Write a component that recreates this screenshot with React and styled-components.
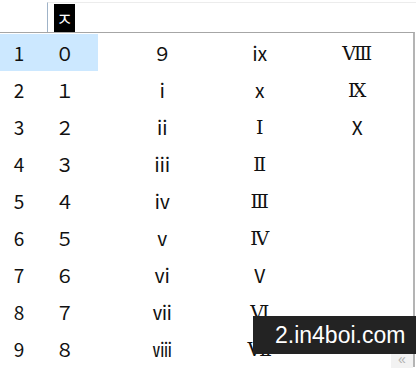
import React from 'react'
import styled, { createGlobalStyle } from 'styled-components'

const Global = createGlobalStyle`
  html, body { margin: 0; padding: 0; background: #fff; }
  body { width: 416px; height: 368px; overflow: hidden; position: relative; }
`

const columns = [
  ['０', '１', '２', '３', '４', '５', '６', '７', '８'],
  ['９', 'ⅰ', 'ⅱ', 'ⅲ', 'ⅳ', 'ⅴ', 'ⅵ', 'ⅶ', 'ⅷ'],
  ['ⅸ', 'ⅹ', 'Ⅰ', 'Ⅱ', 'Ⅲ', 'Ⅳ', 'Ⅴ', 'Ⅵ', 'Ⅶ'],
  ['Ⅷ', 'Ⅸ', 'Ⅹ', '', '', '', '', '', ''],
]

// the IME font draws most capital numerals with serifs, but V and X plain
const isSerifRoman = s => /[\u2160-\u216F]/.test(s) && s !== 'Ⅴ' && s !== 'Ⅹ'

const Screen = styled.div`
  width: 416px;
  height: 368px;
  position: relative;
  overflow: hidden;
  font-family: "Noto Sans CJK KR", "Noto Sans", sans-serif;
`

const TopBar = styled.div`
  height: 32px;
  display: flex;
  padding-left: 47px;
  box-sizing: border-box;
`

const InputBox = styled.div`
  flex: 1;
  margin-top: 2px;
  border-top: 1px solid #ececec;
  border-left: 1px solid #9fb3c8;
  display: flex;
  align-items: flex-start;
  padding-left: 6px;
  padding-top: 1px;
`

const Composition = styled.span`
  width: 21px;
  height: 28px;
  background: #000;
  color: #fff;
  font-size: 18px;
  line-height: 28px;
  text-align: center;
`

const Window = styled.div`
  width: 415px;
  box-sizing: border-box;
  border-top: 1px solid #a6a6a6;
  border-right: 2px solid #b4b4b4;
  padding-top: 1px;
`

const Row = styled.div`
  height: 37px;
  display: flex;
`

const Cell = styled.div`
  width: 97.5px;
  height: 37px;
  display: grid;
  grid-template-columns: 32px 1fr;
  align-items: center;
  background: ${p => (p.$active ? '#cce8ff' : 'transparent')};
`

const Index = styled.span`
  font-size: 19px;
  color: #111;
  text-align: center;
  padding-left: 6px;
`

const Cand = styled.span`
  font-family: ${p => (p.$serif ? '"DejaVu Serif", "Noto Sans CJK KR", serif' : 'inherit')};
  font-size: 19px;
  color: #111;
  text-align: center;
  white-space: nowrap;
`

const PageButton = styled.div`
  position: absolute;
  right: 3px;
  bottom: 0;
  width: 22px;
  height: 18px;
  background: #f2f2f2;
  color: #b0b0b0;
  font-family: "Liberation Sans", sans-serif;
  font-size: 14px;
  line-height: 18px;
  text-align: center;
`

const Watermark = styled.div`
  position: absolute;
  left: 253px;
  top: 316px;
  width: 163px;
  height: 38px;
  box-sizing: border-box;
  background: #232323;
  color: #fff;
  font-family: "Liberation Sans", Arial, sans-serif;
  font-size: 23px;
  line-height: 38px;
  padding-left: 22px;
`

export default function App() {
  return (
    <Screen>
      <Global />
      <TopBar>
        <InputBox>
          <Composition>ㅈ</Composition>
        </InputBox>
      </TopBar>
      <Window>
        {columns[0].map((_, r) => (
          <Row key={r}>
            {columns.map((col, c) => (
              <Cell key={c} $active={r === 0 && c === 0}>
                <Index>{c === 0 ? r + 1 : ''}</Index>
                <Cand $serif={isSerifRoman(col[r])}>{col[r]}</Cand>
              </Cell>
            ))}
          </Row>
        ))}
      </Window>
      <PageButton>«</PageButton>
      <Watermark>2.in4boi.com</Watermark>
    </Screen>
  )
}
